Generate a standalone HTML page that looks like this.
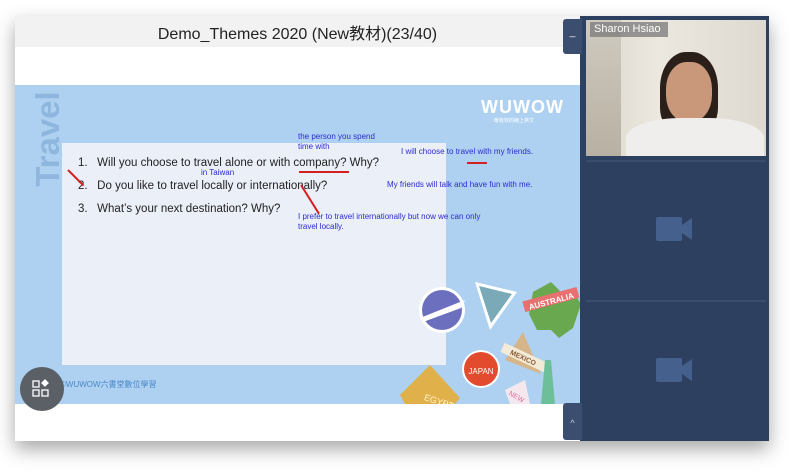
<!DOCTYPE html>
<html><head><meta charset="utf-8"><style>
body{margin:0;width:800px;height:473px;background:#fff;position:relative;overflow:hidden;font-family:"Liberation Sans","Noto Sans CJK TC",sans-serif}
.a{position:absolute}
.win{left:15px;top:16px;width:754px;height:425px;box-shadow:0 8px 18px rgba(0,0,0,.35);background:#fff}
.hw{color:#2a2ad0;font-size:8px;line-height:10px;position:absolute;white-space:nowrap}
.q{position:absolute;left:78px;font-size:11.5px;color:#222;white-space:nowrap}
.red{position:absolute;background:#d42020;height:2px;transform-origin:0 50%}
</style></head><body>
<div class="a win"></div>
<div class="a" style="left:15px;top:16px;width:565px;height:31px;background:#f2f2f2"></div>
<div class="a" style="left:15px;top:20px;width:565px;text-align:center;font-size:16px;color:#222">Demo_Themes 2020 (New教材)(23/40)</div>
<div class="a" style="left:15px;top:85px;width:565px;height:319px;background:#aed1f1"></div>
<div class="a" style="left:62px;top:143px;width:384px;height:222px;background:#ebeff8"></div>
<div class="a" style="left:15px;top:85px;width:565px;height:319px;overflow:hidden">
<svg class="a" style="left:380px;top:185px" width="190" height="134" viewBox="0 0 190 134">
<circle cx="47" cy="40" r="23" fill="#fff"/><circle cx="47" cy="40" r="20" fill="#6c6fbe"/><path d="M25 48l45-18-4 8-38 14z" fill="#fff"/>
<polygon points="80,12 122,22 95,60" fill="#fff"/><polygon points="84,16 117,24 96,53" fill="#7aaab8"/>
<path d="M138 22l18-10 12 12 12 0 6 10-8 24-14 10-8-8-14 0-8-16z" fill="#6aa84f"/>
<rect x="128" y="24" width="56" height="11" fill="#e87070" transform="rotate(-15 156 30)"/>
<text x="156" y="34" font-size="8" fill="#fff" font-weight="bold" text-anchor="middle" transform="rotate(-15 156 30)">AUSTRALIA</text>
<polygon points="128,62 110,90 146,104" fill="#d7b58a"/><rect x="105" y="82" width="48" height="10" fill="#f4ead8" transform="rotate(25 128 88)"/>
<text x="128" y="90" font-size="7" fill="#8a5a30" font-weight="bold" text-anchor="middle" transform="rotate(25 128 88)">MEXICO</text>
<circle cx="86" cy="99" r="19" fill="#fff"/><circle cx="86" cy="99" r="17" fill="#e24b2e"/><text x="86" y="104" font-size="8" fill="#fff" text-anchor="middle">JAPAN</text>
<polygon points="35,95 5,125 10,134 60,134 65,128" fill="#e0b04a"/><text x="30" y="130" font-size="9" fill="#fff6d0" transform="rotate(18 30 125)">EGYPT</text>
<path d="M110 120l20-10 5 24-20 0z" fill="#f4e8ee"/><text x="114" y="128" font-size="7" fill="#e06a9a" transform="rotate(30 120 125)">NEW</text>
<path d="M150 90l6 0 4 44-14 0z" fill="#6dbf9a"/>
</svg>
</div>
<div class="a" style="left:-5px;top:124px;width:106px;height:30px;transform:rotate(-90deg);font-weight:bold;font-size:33px;color:#8fb7de;text-align:center;line-height:30px">Travel</div>
<div class="a" style="left:481px;top:97px;font-size:18px;color:#fff;font-weight:bold;letter-spacing:1px">WUWOW</div>
<div class="a" style="left:494px;top:117px;font-size:5px;color:#fff">最有效的線上英文</div>
<div class="q" style="top:157px">1.&nbsp;&nbsp;&nbsp;Will you choose to travel alone or with <span>company</span>? Why?</div>
<div class="q" style="top:180px">2.&nbsp;&nbsp;&nbsp;Do you like to travel locally or internationally?</div>
<div class="q" style="top:203px">3.&nbsp;&nbsp;&nbsp;What’s your next destination? Why?</div>
<div class="hw" style="left:298px;top:132px">the person you spend<br>time with</div>
<div class="hw" style="left:201px;top:168px">in Taiwan</div>
<div class="hw" style="left:401px;top:147px">I will choose to travel with my friends.</div>
<div class="hw" style="left:387px;top:180px">My friends will talk and have fun with me.</div>
<div class="hw" style="left:298px;top:212px">I prefer to travel internationally but now we can only<br>travel locally.</div>
<div class="red" style="left:299px;top:171px;width:50px"></div>
<div class="red" style="left:467px;top:162px;width:20px"></div>
<div class="red" style="left:68px;top:169px;width:22px;transform:rotate(45deg)"></div>
<div class="red" style="left:301px;top:184px;width:34px;transform:rotate(58deg)"></div>
<div class="a" style="left:60px;top:379px;font-size:8px;color:#4a86c8">©WUWOW六書堂數位學習</div>
<div class="a" style="left:20px;top:367px;width:44px;height:44px;border-radius:50%;background:#5b5f66"></div>
<svg class="a" style="left:31px;top:379px" width="22" height="20" viewBox="0 0 22 20" fill="none" stroke="#fff" stroke-width="1.3"><rect x="2" y="2" width="6" height="6"/><rect x="2" y="11" width="6" height="6"/><rect x="11" y="11" width="6" height="6"/><path d="M14 1l3 3-3 3-3-3z" fill="#fff"/></svg>
<div class="a" style="left:580px;top:16px;width:189px;height:425px;background:#2e405f"></div>
<div class="a" style="left:563px;top:19px;width:19px;height:35px;background:#3b4e70;border-radius:3px 0 0 3px;color:#fff;font-size:10px;text-align:center;line-height:28px">_</div>
<div class="a" style="left:563px;top:403px;width:19px;height:37px;background:#3b4e70;border-radius:3px 0 0 3px;color:#c9d3e3;font-size:9px;text-align:center;line-height:40px">^</div>
<div class="a" style="left:586px;top:20px;width:180px;height:136px;background:linear-gradient(90deg,#d9d6cc,#ece8df 40%,#ddd9d0);overflow:hidden">
<div class="a" style="left:0;top:0;width:35px;height:136px;background:linear-gradient(#cfcac0,#b8b0a2)"></div>
<div class="a" style="left:74px;top:32px;width:58px;height:80px;border-radius:45% 45% 30% 30%;background:#2b1f1a"></div>
<div class="a" style="left:80px;top:42px;width:46px;height:60px;border-radius:45%;background:#c9987a"></div>
<div class="a" style="left:40px;top:98px;width:138px;height:50px;border-radius:40% 40% 0 0;background:#f0eeec"></div>
</div>
<div class="a" style="left:590px;top:22px;width:78px;height:15px;background:rgba(120,120,120,.75);color:#fff;font-size:11px;line-height:15px;padding-left:4px;box-sizing:border-box">Sharon Hsiao</div>
<div class="a" style="left:586px;top:160px;width:180px;height:136px;background:#2e405f;border-top:2px solid #3a4d6e"></div>
<div class="a" style="left:586px;top:300px;width:180px;height:137px;background:#2e405f;border-top:2px solid #3a4d6e"></div>
<svg class="a" style="left:656px;top:215px" width="40" height="28"><rect x="0" y="2" width="26" height="24" rx="2" fill="#45608c"/><polygon points="26,10 36,3 36,25 26,18" fill="#45608c"/></svg>
<svg class="a" style="left:656px;top:356px" width="40" height="28"><rect x="0" y="2" width="26" height="24" rx="2" fill="#45608c"/><polygon points="26,10 36,3 36,25 26,18" fill="#45608c"/></svg>
</body></html>
